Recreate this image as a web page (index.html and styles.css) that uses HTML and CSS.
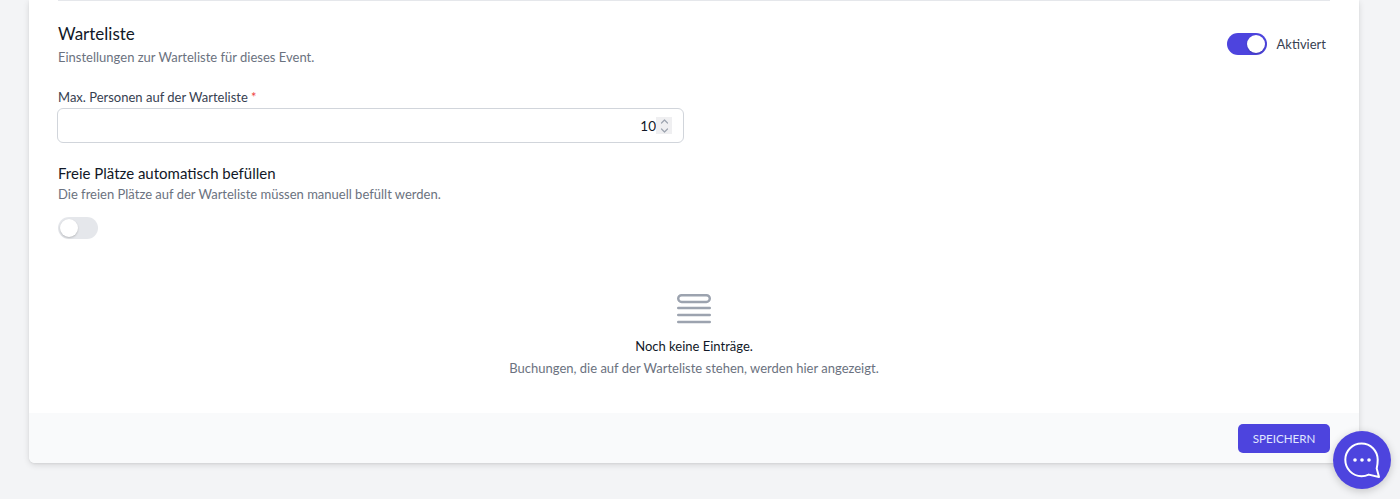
FILE: index.html
```html
<!DOCTYPE html>
<html lang="de">
<head>
    <meta charset="UTF-8">
    <meta name="viewport" content="width=device-width, initial-scale=1.0">
    <title>Warteliste</title>
    <link rel="stylesheet" href="styles.css">
</head>
<body>
    <div class="card">
        <div class="card-body">
            <div class="section-head">
                <div>
                    <h2 class="section-title">Warteliste</h2>
                    <p class="section-hint">Einstellungen zur Warteliste für dieses Event.</p>
                </div>
                <div class="switch-row">
                    <span class="switch switch-on"><span class="knob"></span></span>
                    <span class="switch-label">Aktiviert</span>
                </div>
            </div>

            <div class="field">
                <label class="field-label" for="maxPersons">Max. Personen auf der Warteliste <span class="required">*</span></label>
                <div class="number-input" id="maxPersons">
                    <span class="number-value">10</span>
                    <span class="spinner">
                        <svg width="9" height="16" viewBox="0 0 9 16" fill="none" stroke="#9ca3af" stroke-width="1.2" stroke-linecap="round" stroke-linejoin="round">
                            <path d="M1.5 5 4.5 2l3 3"/>
                            <path d="M1.5 11l3 3 3-3"/>
                        </svg>
                    </span>
                </div>
            </div>

            <div class="autofill">
                <h3 class="autofill-title">Freie Plätze automatisch befüllen</h3>
                <p class="section-hint">Die freien Plätze auf der Warteliste müssen manuell befüllt werden.</p>
                <span class="switch"><span class="knob"></span></span>
            </div>

            <div class="empty">
                <svg class="empty-icon" width="34" height="30" viewBox="0 0 34 30" fill="none" stroke="#9ca3af" stroke-width="2.4" stroke-linecap="round">
                    <rect x="1.2" y="1.2" width="31.6" height="6.8" rx="3.4"/>
                    <path d="M1.2 14h31.6"/>
                    <path d="M1.2 21h31.6"/>
                    <path d="M1.2 28h31.6"/>
                </svg>
                <p class="empty-title">Noch keine Einträge.</p>
                <p class="empty-text">Buchungen, die auf der Warteliste stehen, werden hier angezeigt.</p>
            </div>
        </div>
        <div class="card-footer">
            <button class="save-btn">SPEICHERN</button>
        </div>
    </div>

    <div class="chat-bubble">
        <svg width="38" height="38" viewBox="0 0 38 38" fill="none">
            <path d="M18.5 2.5C9.5 2.5 2.3 9.8 2.3 18.8S9.5 35.2 18.5 35.2c2.6 0 5-.6 7.2-1.6L36 36l-2.3-8.6c.7-2.6 1-5.8 1-8.6C34.7 9.8 27.5 2.5 18.5 2.5Z" stroke="#fff" stroke-width="2" stroke-linejoin="round"/>
            <circle cx="12" cy="19" r="1.8" fill="#fff"/>
            <circle cx="19" cy="19" r="1.8" fill="#fff"/>
            <circle cx="26" cy="19" r="1.8" fill="#fff"/>
        </svg>
    </div>
</body>
</html>
```

FILE: styles.css
```css
* {
    box-sizing: border-box;
}

html, body {
    height: 499px;
    overflow: hidden;
}

body {
    margin: 0;
    padding: 0 41px 0 29px;
    background-color: #f3f4f6;
    color: #111827;
    font-family: "Lato", "Noto Sans", sans-serif;
}

h2, h3, p {
    margin: 0;
    font-weight: 400;
}

.card {
    background-color: white;
    border-radius: 0 0 6px 6px;
    box-shadow: 0 2px 6px rgba(0, 0, 0, 0.12), 0 1px 2px rgba(0, 0, 0, 0.05);
    overflow: hidden;
}

.card-body {
    height: 413px;
    padding: 0 29px;
}

.section-head {
    display: flex;
    justify-content: space-between;
    align-items: center;
    border-top: 1px solid #e5e7eb;
    padding-top: 21px;
}

.section-title {
    font-size: 17px;
    line-height: 24px;
}

.section-hint {
    margin-top: 1px;
    font-size: 13px;
    line-height: 20px;
    color: #6b7280;
}

.switch-row {
    display: flex;
    align-items: center;
    gap: 10px;
    padding: 0 4px 2px 0;
}

.switch-label {
    font-size: 13px;
    color: #374151;
}

.switch {
    display: block;
    width: 40px;
    height: 22px;
    padding: 2px;
    border-radius: 11px;
    background-color: #e5e7eb;
}

.switch-on {
    background-color: #4d44de;
}

.switch-on .knob {
    margin-left: 18px;
}

.knob {
    display: block;
    width: 18px;
    height: 18px;
    border-radius: 50%;
    background-color: white;
    box-shadow: 0 1px 2px rgba(0, 0, 0, 0.2);
}

.field {
    margin-top: 20px;
}

.field-label {
    display: block;
    font-size: 13px;
    line-height: 20px;
    color: #374151;
}

.required {
    color: #ef4444;
}

.number-input {
    display: flex;
    justify-content: flex-end;
    align-items: center;
    width: 627px;
    height: 35px;
    margin: 1px 0 0 -1px;
    padding-right: 11px;
    border: 1px solid #d1d5db;
    border-radius: 6px;
    font-size: 13.5px;
}

.spinner {
    display: flex;
    align-items: center;
    justify-content: center;
    width: 16px;
    height: 17px;
    background-color: #efeff1;
}

.autofill {
    margin-top: 19px;
}

.autofill-title {
    font-size: 15px;
    line-height: 22px;
}

.autofill .section-hint {
    margin-top: 0;
}

.autofill .switch {
    margin-top: 13px;
}

.empty {
    display: flex;
    flex-direction: column;
    align-items: center;
    margin-top: 55px;
}

.empty-title {
    margin-top: 12px;
    font-size: 13px;
    line-height: 20px;
}

.empty-text {
    margin-top: 2px;
    font-size: 13px;
    line-height: 20px;
    color: #6b7280;
}

.card-footer {
    display: flex;
    justify-content: flex-end;
    height: 50px;
    padding: 11px 29px 0 0;
    background-color: #f9fafb;
}

.save-btn {
    width: 92px;
    height: 29px;
    border: none;
    border-radius: 5px;
    background-color: #4d44de;
    color: #e0e7ff;
    font-family: inherit;
    font-size: 11.6px;
}

.chat-bubble {
    position: fixed;
    right: 9px;
    bottom: 10px;
    display: flex;
    align-items: center;
    justify-content: center;
    width: 58px;
    height: 58px;
    border-radius: 50%;
    background-color: #4d44de;
    box-shadow: 0 2px 8px rgba(0, 0, 0, 0.2);
}
```
